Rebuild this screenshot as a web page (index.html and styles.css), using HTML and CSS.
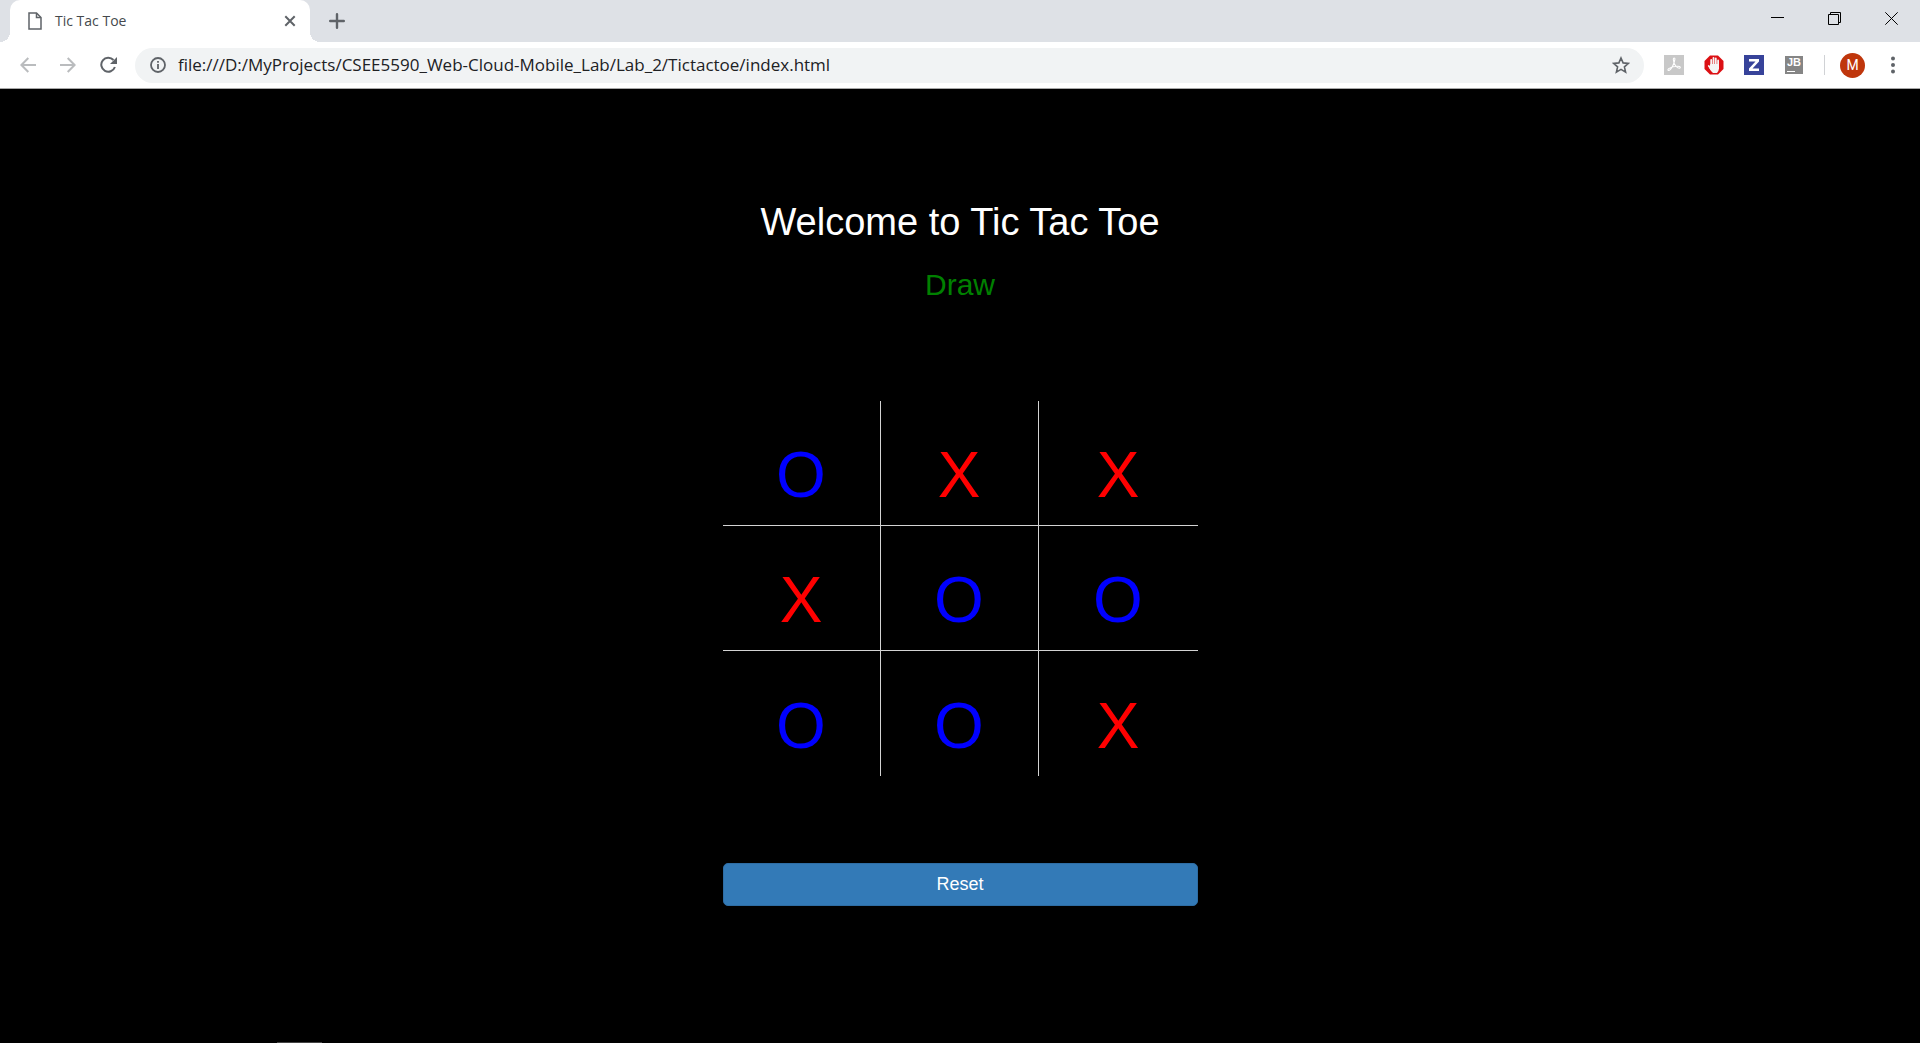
FILE: index.html
```html
<!DOCTYPE html>
<html lang="en">
<head>
<meta charset="utf-8">
<title>Tic Tac Toe</title>
<link rel="stylesheet" href="styles.css">
</head>
<body>
<header class="browser">
  <div class="tab-strip">
    <div class="tab">
      <svg class="tab-icon" width="14" height="18" viewBox="0 0 14 18" fill="none" stroke="#5f6368" stroke-width="1.5"><path d="M1 1h7.500l4.500 4.500V17H1z"/><path d="M8.500 1v4.500H13"/></svg>
      <span class="tab-title">Tic Tac Toe</span>
      <button class="icon-button tab-close" aria-label="Close tab"><svg width="12" height="12" viewBox="0 0 12 12" stroke="#5f6368" stroke-width="2"><path d="M1.300 1.300l9.400 9.400M10.700 1.300l-9.400 9.400"/></svg></button>
    </div>
    <button class="icon-button new-tab" aria-label="New tab"><svg width="16" height="16" viewBox="0 0 16 16" stroke="#5f6368" stroke-width="2.400" stroke-linecap="round"><path d="M8 1.200v13.600M1.200 8h13.600"/></svg></button>
    <div class="window-controls">
      <button class="icon-button" aria-label="Minimize"><svg width="13" height="13" viewBox="0 0 13 13" stroke="#000"><path d="M0 5.500h13"/></svg></button>
      <button class="icon-button" aria-label="Restore"><svg width="13" height="13" viewBox="0 0 13 13" fill="none" stroke="#000"><path d="M.5 2.500h10v10H.5zM2.500 2.500v-2h10v10h-2"/></svg></button>
      <button class="icon-button" aria-label="Close window"><svg width="13" height="13" viewBox="0 0 13 13" stroke="#000"><path d="M.3.3l12.400 12.400M12.700.3L.3 12.700"/></svg></button>
    </div>
  </div>
  <div class="toolbar">
    <nav class="nav-buttons">
      <button class="icon-button" aria-label="Back"><svg width="16" height="16" viewBox="0 0 16 16" fill="none" stroke="#babcbe" stroke-width="2"><path d="M16 8H1.500M8.300 1L1.400 8l6.900 7"/></svg></button>
      <button class="icon-button" aria-label="Forward"><svg width="16" height="16" viewBox="0 0 16 16" fill="none" stroke="#babcbe" stroke-width="2"><path d="M0 8h14.500M7.700 1l6.900 7-6.900 7"/></svg></button>
      <button class="icon-button" aria-label="Reload"><svg width="18" height="18" viewBox="0 0 18 18" fill="none" stroke="#5f6368" stroke-width="2"><path d="M13.500 4A7 7 0 1 0 14.900 11"/><path d="M17 1v7h-7z" fill="#5f6368" stroke="none"/></svg></button>
    </nav>
    <div class="address">
      <svg width="16" height="16" viewBox="0 0 16 16" fill="none" stroke="#5f6368" stroke-width="1.800"><circle cx="8" cy="8" r="7"/><path d="M8 7v5M8 4v1.800"/></svg>
      <input class="url" type="text" aria-label="Address" value="file:///D:/MyProjects/CSEE5590_Web-Cloud-Mobile_Lab/Lab_2/Tictactoe/index.html">
      <button class="icon-button" aria-label="Bookmark this page"><svg width="18" height="18" viewBox="0 0 18 18" fill="none" stroke="#5f6368" stroke-width="1.600"><path d="M9 2l2.100 4.900 5.300.5-4 3.500 1.200 5.200L9 13.400l-4.600 2.700 1.200-5.200-4-3.500 5.300-.5z"/></svg></button>
    </div>
    <div class="extensions">
      <button class="icon-button" aria-label="PDF tools"><svg width="20" height="20" viewBox="0 0 20 20"><path fill="#c8c8c8" d="M0 0h20v20H0z"/><path d="M9.300 4.200c0-1.600 1.800-1.600 1.600 0-.2 2-.9 4-2 6.200-1.300 2.600-2.600 4.700-4 5-1.200.2-1.300-1.100-.2-1.800 2-1.300 5.600-2.400 9.300-2.400 2.400 0 3 1.700 1.400 2-2.200.2-5.900-3.800-6.100-9z" fill="none" stroke="#fff" stroke-width="1.100"/></svg></button>
      <button class="icon-button" aria-label="Ad blocker"><svg width="20" height="20" viewBox="0 0 20 20"><path fill="#dc1014" d="M6 .5h8L19.500 6v8L14 19.500H6L.5 14V6z"/><path d="M7.200 11V5M9.500 10V3M11.800 10V3.500M14.100 12V5.500M4.800 11l3 4" stroke="#f5f5f5" stroke-width="1.800" stroke-linecap="round"/><path fill="#f5f5f5" d="M6.300 9H15v4.500q-.3 3-2 4.500H9q-2-1.500-3.500-4.500z"/></svg></button>
      <button class="icon-button" aria-label="Z extension"><svg width="20" height="20" viewBox="0 0 20 20"><path fill="#37439a" d="M0 0h20v20H0z"/><path fill="#fff" d="M5 4h10v2.500L8.500 13.500H15V16H5v-2.500l6.500-7H5z"/></svg></button>
      <button class="icon-button jb" aria-label="JetBrains">JB</button>
      <div class="profile">
        <span class="divider"></span>
        <button class="avatar" aria-label="Profile">M</button>
        <button class="icon-button menu" aria-label="Menu"><svg width="4" height="18" viewBox="0 0 4 18" fill="#5f6368"><circle cx="2" cy="2.500" r="2"/><circle cx="2" cy="9" r="2"/><circle cx="2" cy="15.500" r="2"/></svg></button>
      </div>
    </div>
  </div>
</header>
<main class="game">
  <h1 class="title">Welcome to Tic Tac Toe</h1>
  <h2 class="result">Draw</h2>
  <div class="board">
    <button class="cell o">O</button>
    <button class="cell x">X</button>
    <button class="cell x">X</button>
    <button class="cell x">X</button>
    <button class="cell o">O</button>
    <button class="cell o">O</button>
    <button class="cell o">O</button>
    <button class="cell o">O</button>
    <button class="cell x">X</button>
  </div>
  <button class="reset">Reset</button>
</main>
<div class="page-foot"></div>
</body>
</html>
```
FILE: styles.css
```css
* {
  box-sizing: border-box;
}

body {
  margin: 0;
  min-height: 100vh;
  display: flex;
  flex-direction: column;
  background: #000;
  font-family: "Liberation Sans", Arial, sans-serif;
}

button {
  margin: 0;
  padding: 0;
  border: 0;
  background: none;
  font-family: inherit;
}

svg {
  display: block;
}

.icon-button {
  display: flex;
  align-items: center;
  justify-content: center;
  flex: none;
}

.browser {
  background: #fff;
  border-bottom: 1px solid #a8a8a8;
  font-family: "Open Sans", "Segoe UI", sans-serif;
}

.tab-strip {
  display: flex;
  align-items: stretch;
  height: 42px;
  padding-left: 10px;
  background: #dee1e6;
}

.tab {
  position: relative;
  display: flex;
  align-items: center;
  width: 300px;
  padding: 0 14px 0 18px;
  border-radius: 10px 10px 0 0;
  background: #fff;
}

.tab::before,
.tab::after {
  content: "";
  position: absolute;
  bottom: 0;
  width: 10px;
  height: 10px;
}

.tab::before {
  right: 100%;
  background: radial-gradient(circle at 0 0, #dee1e6 10px, #fff 10px);
}

.tab::after {
  left: 100%;
  background: radial-gradient(circle at 100% 0, #dee1e6 10px, #fff 10px);
}

.tab-title {
  flex: 1;
  padding-left: 13px;
  color: #45494d;
  font-size: 14px;
  line-height: 20px;
}

.new-tab {
  width: 54px;
}

.window-controls {
  display: flex;
  margin-left: auto;
}

.window-controls .icon-button {
  width: 57px;
  padding-bottom: 5px;
}

.toolbar {
  display: flex;
  align-items: center;
  height: 46px;
  padding: 0 14px 0 20px;
}

.nav-buttons {
  display: flex;
  align-items: center;
  gap: 24px;
  width: 115px;
}

.address {
  display: flex;
  align-items: center;
  flex: 1;
  height: 35px;
  padding: 0 14px 0 15px;
  border-radius: 18px;
  background: #f1f3f4;
}

.url {
  flex: 1;
  min-width: 0;
  padding: 0 0 0 12px;
  border: 0;
  outline: 0;
  background: none;
  color: #202124;
  font-family: inherit;
  font-size: 17px;
  line-height: 24px;
}

.extensions {
  display: flex;
  align-items: center;
  gap: 20px;
  padding-left: 20px;
}

.profile {
  display: flex;
  align-items: center;
  gap: 15px;
}

.jb {
  position: relative;
  align-items: flex-start;
  width: 18px;
  height: 18px;
  margin: 0 1px;
  background: #858585;
  color: #fff;
  font-family: "Liberation Sans", Arial, sans-serif;
  font-size: 11px;
  font-weight: 700;
  line-height: 13px;
}

.jb::after {
  content: "";
  position: absolute;
  left: 2px;
  bottom: 2px;
  width: 8px;
  height: 1px;
  background: #fff;
}

.divider {
  width: 1px;
  height: 20px;
  background: #d0d2d5;
}

.avatar {
  width: 25px;
  height: 25px;
  border-radius: 50%;
  background: #bf360c;
  color: #fff;
  font-family: Roboto, sans-serif;
  font-size: 14px;
  line-height: 25px;
}

.menu {
  width: 26px;
}

.game {
  display: flex;
  flex-direction: column;
  width: 475px;
  margin: 0 auto;
  padding-top: 111px;
}

.title,
.result {
  margin: 0;
  font-weight: 400;
  text-align: center;
}

.title {
  color: #fff;
  font-size: 38px;
  line-height: 44px;
}

.result {
  margin-top: 24px;
  color: #008000;
  font-size: 30px;
  line-height: 34px;
}

.board {
  display: grid;
  grid-template-columns: 158px 158px 1fr;
  grid-auto-rows: 125px;
  margin-top: 99px;
}

.cell {
  padding-top: 24px;
  border: 0 solid #d3d3d3;
  font-size: 64px;
  line-height: 72px;
}

.cell:not(:nth-child(3n)) {
  border-right-width: 1px;
}

.cell:nth-child(-n + 6) {
  border-bottom-width: 1px;
}

.x {
  color: #f00;
}

.o {
  color: #00f;
}

.reset {
  height: 43px;
  margin-top: 87px;
  padding-bottom: 2px;
  border: 1px solid #2e6da4;
  border-radius: 5px;
  background: #337ab7;
  color: #fff;
  font-size: 18px;
  line-height: 24px;
}

.page-foot {
  width: 45px;
  height: 1px;
  margin: auto 0 0 277px;
  background: #444;
}
```
